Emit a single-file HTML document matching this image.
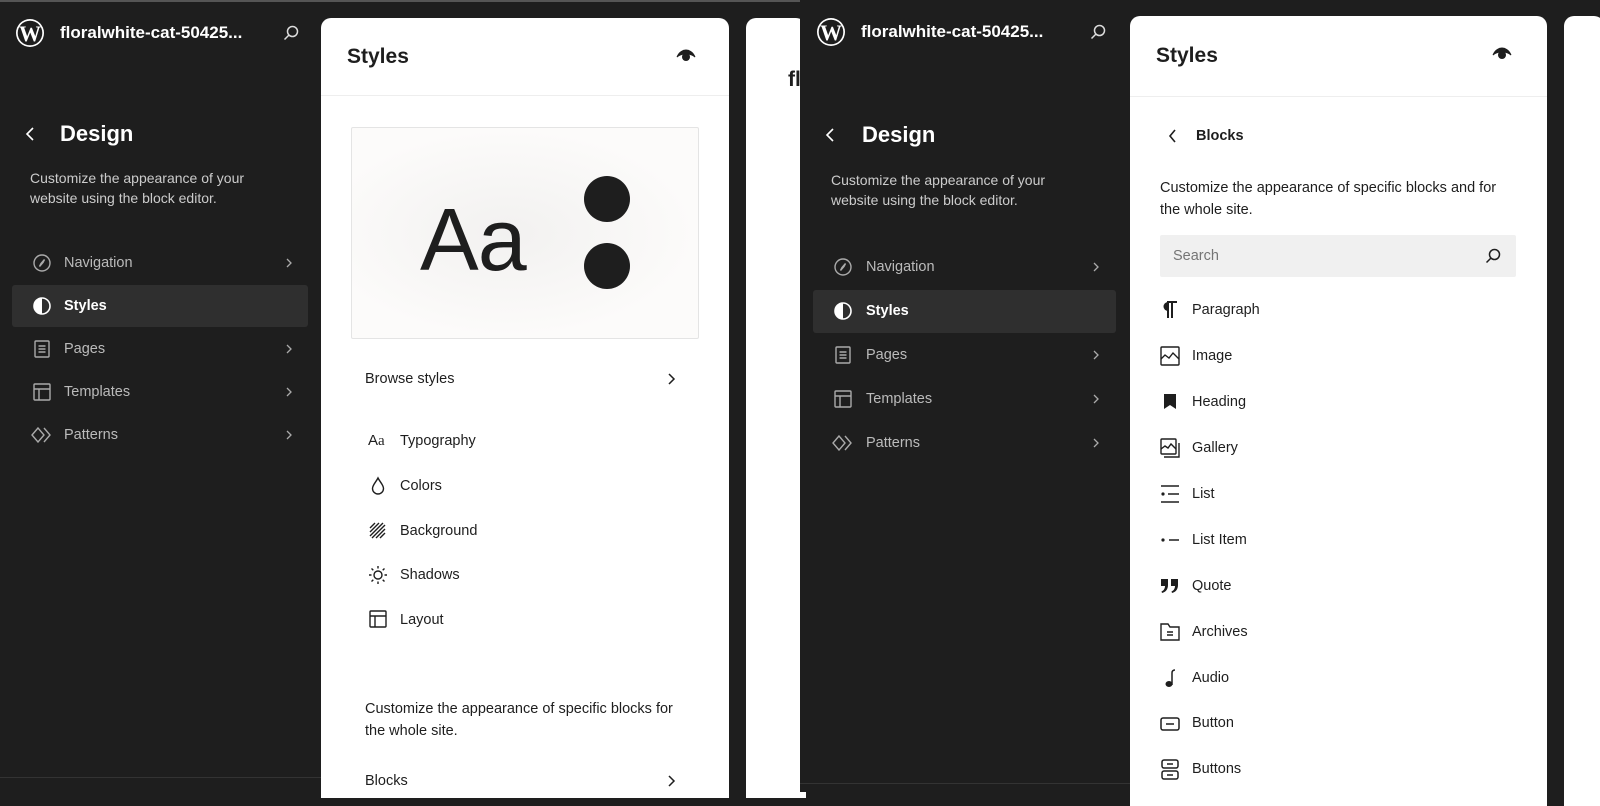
<!DOCTYPE html>
<html><head><meta charset="utf-8"><style>
*{margin:0;padding:0;box-sizing:border-box}
body{width:1600px;height:792px;background:#1e1e1e;position:relative;overflow:hidden;font-family:"Liberation Sans",sans-serif}
.a{position:absolute;white-space:nowrap}
.w{color:#fff}
.card{position:absolute;background:#fff;border-radius:10px 10px 0 0}
.nav{font-size:14.5px;color:#bbb;line-height:20px}
.ic{position:absolute}
.blk{font-size:14.5px;color:#1e1e1e;line-height:20px}
</style></head><body>
<div class="a" style="left:0;top:0;width:800px;height:2px;background:#555"></div>

<!-- LEFT SCREENSHOT -->
<svg class="ic" style="left:15px;top:18px" width="30" height="30" viewBox="0 0 30 30"><circle cx="15" cy="15" r="14" fill="#fff"/><circle cx="15" cy="15" r="12.3" fill="#1e1e1e"/><text x="15" y="23" text-anchor="middle" font-family="Liberation Serif" font-weight="bold" font-size="22" fill="#fff">W</text></svg>
<div class="a w" style="left:60px;top:23px;font-size:17px;font-weight:bold;line-height:20px">floralwhite-cat-50425...</div>
<svg class="ic" style="left:282px;top:24px" width="18" height="18" viewBox="0 0 18 18" fill="none" stroke="#ddd" stroke-width="1.5"><circle cx="10.5" cy="7.5" r="5"/><path d="M7 11l-4.5 4.5"/></svg>
<svg class="ic" style="left:24px;top:126px" width="14" height="16"><path d="M9 2L3 8l6 6" fill="none" stroke="#fff" stroke-width="1.6"/></svg>
<div class="a w" style="left:60px;top:121px;font-size:22px;font-weight:bold;line-height:26px">Design</div>
<div class="a" style="left:30px;top:169px;font-size:14px;line-height:19.5px;color:#ccc">Customize the appearance of your<br>website using the block editor.</div>
<div class="a" style="left:12px;top:285px;width:296px;height:42px;background:#2f2f2f;border-radius:3px"></div>
<svg class="ic" style="left:33px;top:254px" width="18" height="18" fill="none" stroke="#aaa" stroke-width="1.4"><circle cx="9" cy="9" r="8"/><path d="M11.5 5.5L8 9.5 6.5 12.5 10 8.5z" fill="#aaa"/></svg>
<svg class="ic" style="left:33px;top:297px" width="18" height="18"><circle cx="9" cy="9" r="8" fill="none" stroke="#fff" stroke-width="1.6"/><path d="M9 1a8 8 0 0 0 0 16z" fill="#fff"/></svg>
<svg class="ic" style="left:34px;top:340px" width="16" height="18" fill="none" stroke="#aaa" stroke-width="1.4"><rect x="1" y="1" width="14" height="16" rx="1"/><path d="M4.5 6h7M4.5 9h7M4.5 12h7"/></svg>
<svg class="ic" style="left:33px;top:383px" width="18" height="18" fill="none" stroke="#aaa" stroke-width="1.4"><rect x="1" y="1" width="16" height="16" rx="1"/><path d="M1 6h16M6 6v11"/></svg>
<svg class="ic" style="left:31px;top:427px" width="22" height="16" fill="none" stroke="#aaa" stroke-width="1.4"><path d="M7 1L1 8l6 7 6-7z"/><path d="M13 1l6 7-6 7"/></svg>
<div class="a nav" style="left:64px;top:253px">Navigation</div>
<div class="a nav" style="left:64px;top:296px;color:#fff;font-weight:bold">Styles</div>
<div class="a nav" style="left:64px;top:339px">Pages</div>
<div class="a nav" style="left:64px;top:382px">Templates</div>
<div class="a nav" style="left:64px;top:425px">Patterns</div>
<svg class="ic" style="left:285px;top:257px" width="8" height="12"><path d="M2 2l4 4-4 4" fill="none" stroke="#aaa" stroke-width="1.3"/></svg>
<svg class="ic" style="left:285px;top:343px" width="8" height="12"><path d="M2 2l4 4-4 4" fill="none" stroke="#aaa" stroke-width="1.3"/></svg>
<svg class="ic" style="left:285px;top:386px" width="8" height="12"><path d="M2 2l4 4-4 4" fill="none" stroke="#aaa" stroke-width="1.3"/></svg>
<svg class="ic" style="left:285px;top:429px" width="8" height="12"><path d="M2 2l4 4-4 4" fill="none" stroke="#aaa" stroke-width="1.3"/></svg>
<div class="a" style="left:0;top:777px;width:321px;height:1px;background:#333"></div>

<div class="card" style="left:321px;top:18px;width:408px;height:780px">
 <div class="a" style="left:26px;top:27px;font-size:21px;font-weight:bold;color:#1e1e1e;line-height:24px">Styles</div>
 <svg class="ic" style="left:355px;top:30px" width="20" height="16"><path d="M1 9c2-5 6-7 9-7s7 2 9 7c-2-2-5-3-9-3s-7 1-9 3z" fill="#1e1e1e" stroke="#1e1e1e" stroke-width="1"/><circle cx="10" cy="9" r="4" fill="#1e1e1e"/></svg>
 <div class="a" style="left:0;top:77px;width:408px;height:1px;background:#eee"></div>
 <div class="a" style="left:30px;top:109px;width:348px;height:212px;border:1px solid #e4e4e4;border-radius:2px;background:radial-gradient(ellipse at 45% 50%,#f2f1f0,#fcfbfa 70%)"></div>
 <div class="a" style="left:99px;top:178px;font-size:88px;line-height:88px;color:#1e1e1e;letter-spacing:-1px">Aa</div>
 <div class="a" style="left:263px;top:158px;width:46px;height:46px;border-radius:50%;background:#1e1e1e"></div>
 <div class="a" style="left:263px;top:225px;width:46px;height:46px;border-radius:50%;background:#1e1e1e"></div>
 <div class="a blk" style="left:44px;top:351px">Browse styles</div>
 <svg class="ic" style="left:346px;top:354px" width="10" height="14"><path d="M2 2l5 5-5 5" fill="none" stroke="#1e1e1e" stroke-width="1.5"/></svg>
 <div class="a" style="left:47px;top:414px;font-size:15px;color:#1e1e1e">A<span style="font-family:'Liberation Serif';font-size:15px">a</span></div>
 <svg class="ic" style="left:49px;top:458px" width="16" height="20" fill="none" stroke="#1e1e1e" stroke-width="1.4"><path d="M8 2C6 6 2.5 9 2.5 12.5a5.5 5.5 0 0 0 11 0C13.5 9 10 6 8 2z"/></svg>
 <svg class="ic" style="left:48px;top:504px" width="18" height="18" stroke="#1e1e1e" stroke-width="1.4"><path d="M1 6l5-5M1 10l9-9M1 14l13-13M3 16l13-13M7 16l9-9M11 16l5-5"/></svg>
 <svg class="ic" style="left:47px;top:547px" width="20" height="20" fill="none" stroke="#1e1e1e" stroke-width="1.4"><circle cx="10" cy="10" r="4"/><path d="M10 1v2.5M10 16.5V19M1 10h2.5M16.5 10H19M3.5 3.5l1.8 1.8M14.7 14.7l1.8 1.8M3.5 16.5l1.8-1.8M14.7 5.3l1.8-1.8"/></svg>
 <svg class="ic" style="left:48px;top:592px" width="18" height="18" fill="none" stroke="#1e1e1e" stroke-width="1.4"><rect x="1" y="1" width="16" height="16" rx="1"/><path d="M1 6h16M6 6v11"/></svg>
 <div class="a blk" style="left:79px;top:413px">Typography</div>
 <div class="a blk" style="left:79px;top:458px">Colors</div>
 <div class="a blk" style="left:79px;top:503px">Background</div>
 <div class="a blk" style="left:79px;top:547px">Shadows</div>
 <div class="a blk" style="left:79px;top:592px">Layout</div>
 <div class="a blk" style="left:44px;top:681px;line-height:21.5px;white-space:normal;width:330px">Customize the appearance of specific blocks for the whole site.</div>
 <div class="a blk" style="left:44px;top:753px">Blocks</div>
 <svg class="ic" style="left:346px;top:756px" width="10" height="14"><path d="M2 2l5 5-5 5" fill="none" stroke="#1e1e1e" stroke-width="1.5"/></svg>
</div>
<div class="card" style="left:746px;top:18px;width:60px;height:780px">
 <div class="a" style="left:42px;top:50px;font-size:21px;font-weight:bold;color:#1e1e1e">fl</div>
</div>

<!-- RIGHT SCREENSHOT -->
<div class="a" style="left:800px;top:0;width:800px;height:792px;background:#1e1e1e"></div>
<svg class="ic" style="left:816px;top:17px" width="30" height="30" viewBox="0 0 30 30"><circle cx="15" cy="15" r="14" fill="#fff"/><circle cx="15" cy="15" r="12.3" fill="#1e1e1e"/><text x="15" y="23" text-anchor="middle" font-family="Liberation Serif" font-weight="bold" font-size="22" fill="#fff">W</text></svg>
<div class="a w" style="left:861px;top:22px;font-size:17px;font-weight:bold;line-height:20px">floralwhite-cat-50425...</div>
<svg class="ic" style="left:1089px;top:23px" width="18" height="18" viewBox="0 0 18 18" fill="none" stroke="#ddd" stroke-width="1.5"><circle cx="10.5" cy="7.5" r="5"/><path d="M7 11l-4.5 4.5"/></svg>
<svg class="ic" style="left:824px;top:127px" width="14" height="16"><path d="M9 2L3 8l6 6" fill="none" stroke="#fff" stroke-width="1.6"/></svg>
<div class="a w" style="left:862px;top:122px;font-size:22px;font-weight:bold;line-height:26px">Design</div>
<div class="a" style="left:831px;top:171px;font-size:14px;line-height:19.5px;color:#ccc">Customize the appearance of your<br>website using the block editor.</div>
<div class="a" style="left:813px;top:290px;width:303px;height:43px;background:#2f2f2f;border-radius:3px"></div>
<svg class="ic" style="left:834px;top:258px" width="18" height="18" fill="none" stroke="#aaa" stroke-width="1.4"><circle cx="9" cy="9" r="8"/><path d="M11.5 5.5L8 9.5 6.5 12.5 10 8.5z" fill="#aaa"/></svg>
<svg class="ic" style="left:834px;top:302px" width="18" height="18"><circle cx="9" cy="9" r="8" fill="none" stroke="#fff" stroke-width="1.6"/><path d="M9 1a8 8 0 0 0 0 16z" fill="#fff"/></svg>
<svg class="ic" style="left:835px;top:346px" width="16" height="18" fill="none" stroke="#aaa" stroke-width="1.4"><rect x="1" y="1" width="14" height="16" rx="1"/><path d="M4.5 6h7M4.5 9h7M4.5 12h7"/></svg>
<svg class="ic" style="left:834px;top:390px" width="18" height="18" fill="none" stroke="#aaa" stroke-width="1.4"><rect x="1" y="1" width="16" height="16" rx="1"/><path d="M1 6h16M6 6v11"/></svg>
<svg class="ic" style="left:832px;top:435px" width="22" height="16" fill="none" stroke="#aaa" stroke-width="1.4"><path d="M7 1L1 8l6 7 6-7z"/><path d="M13 1l6 7-6 7"/></svg>
<div class="a nav" style="left:866px;top:257px">Navigation</div>
<div class="a nav" style="left:866px;top:301px;color:#fff;font-weight:bold">Styles</div>
<div class="a nav" style="left:866px;top:345px">Pages</div>
<div class="a nav" style="left:866px;top:389px">Templates</div>
<div class="a nav" style="left:866px;top:433px">Patterns</div>
<svg class="ic" style="left:1092px;top:261px" width="8" height="12"><path d="M2 2l4 4-4 4" fill="none" stroke="#aaa" stroke-width="1.3"/></svg>
<svg class="ic" style="left:1092px;top:349px" width="8" height="12"><path d="M2 2l4 4-4 4" fill="none" stroke="#aaa" stroke-width="1.3"/></svg>
<svg class="ic" style="left:1092px;top:393px" width="8" height="12"><path d="M2 2l4 4-4 4" fill="none" stroke="#aaa" stroke-width="1.3"/></svg>
<svg class="ic" style="left:1092px;top:437px" width="8" height="12"><path d="M2 2l4 4-4 4" fill="none" stroke="#aaa" stroke-width="1.3"/></svg>
<div class="a" style="left:800px;top:783px;width:330px;height:1px;background:#333"></div>

<div class="card" style="left:1130px;top:16px;width:417px;height:790px">
 <div class="a" style="left:26px;top:28px;font-size:21px;font-weight:bold;color:#1e1e1e;line-height:24px">Styles</div>
 <svg class="ic" style="left:362px;top:30px" width="20" height="16"><path d="M1 9c2-5 6-7 9-7s7 2 9 7c-2-2-5-3-9-3s-7 1-9 3z" fill="#1e1e1e" stroke="#1e1e1e" stroke-width="1"/><circle cx="10" cy="9" r="4" fill="#1e1e1e"/></svg>
 <div class="a" style="left:0;top:80px;width:417px;height:1px;background:#eee"></div>
 <svg class="ic" style="left:37px;top:112px" width="12" height="16"><path d="M8 2L3 8l5 6" fill="none" stroke="#1e1e1e" stroke-width="1.6"/></svg>
 <div class="a" style="left:66px;top:110px;font-size:14.5px;font-weight:bold;color:#1e1e1e;line-height:20px">Blocks</div>
 <div class="a blk" style="left:30px;top:162px;line-height:21.5px">Customize the appearance of specific blocks and for<br>the whole site.</div>
 <div class="a" style="left:30px;top:219px;width:356px;height:42px;background:#f0f0f0;border-radius:2px"></div>
 <div class="a" style="left:43px;top:230px;font-size:14.5px;color:#757575;line-height:20px">Search</div>
 <svg class="ic" style="left:354px;top:231px" width="18" height="18" fill="none" stroke="#1e1e1e" stroke-width="1.5"><circle cx="10.5" cy="7.5" r="5"/><path d="M7 11l-4.5 4.5"/></svg>
 <svg class="ic" style="left:30px;top:284px" width="20" height="20"><path d="M7 2h10M8 2v16M12 2v16" stroke="#1e1e1e" stroke-width="2" fill="none"/><path d="M8 2a4.5 4.5 0 0 0 0 9z" fill="#1e1e1e"/></svg>
 <svg class="ic" style="left:30px;top:330px" width="20" height="20" fill="none" stroke="#1e1e1e" stroke-width="1.4"><rect x="1" y="1" width="18" height="18" rx="1"/><path d="M1 13l4-4 4 3 4-5 6 6"/></svg>
 <svg class="ic" style="left:32px;top:376px" width="16" height="20"><path d="M2 2h12v15l-6-4-6 4z" fill="#1e1e1e"/></svg>
 <svg class="ic" style="left:30px;top:422px" width="21" height="21" fill="none" stroke="#1e1e1e" stroke-width="1.4"><rect x="1" y="1" width="15" height="15" rx="1"/><path d="M1 11l4-3 3 2 3-4 5 5M4 19h15V5"/></svg>
 <svg class="ic" style="left:30px;top:468px" width="20" height="20" stroke="#1e1e1e" stroke-width="1.5"><path d="M1 2h18M8 10h11M1 18h18"/><circle cx="3" cy="10" r="1.6" fill="#1e1e1e" stroke="none"/></svg>
 <svg class="ic" style="left:30px;top:514px" width="20" height="20" stroke="#1e1e1e" stroke-width="1.5"><path d="M9 10h10"/><circle cx="3" cy="10" r="1.6" fill="#1e1e1e" stroke="none"/></svg>
 <svg class="ic" style="left:30px;top:560px" width="20" height="20" fill="#1e1e1e"><path d="M1 3h7v6c0 4-2 7-6 8l-.5-1.5C4 14.5 5 12 5 10H1zM11 3h7v6c0 4-2 7-6 8l-.5-1.5C14 14.5 15 12 15 10h-4z"/></svg>
 <svg class="ic" style="left:30px;top:606px" width="20" height="20" fill="none" stroke="#1e1e1e" stroke-width="1.4"><path d="M1 2h7l2 3h9v13H1z"/><path d="M7 10h6M7 13h6"/></svg>
 <svg class="ic" style="left:32px;top:652px" width="16" height="20"><path d="M10 17V5c0-2 1-3 3-3" fill="none" stroke="#1e1e1e" stroke-width="1.5"/><ellipse cx="7" cy="16" rx="3.5" ry="3" fill="#1e1e1e"/></svg>
 <svg class="ic" style="left:30px;top:698px" width="20" height="20" fill="none" stroke="#1e1e1e" stroke-width="1.5"><rect x="1" y="4" width="18" height="12" rx="2"/><path d="M6 10h8"/></svg>
 <svg class="ic" style="left:31px;top:743px" width="18" height="22" fill="none" stroke="#1e1e1e" stroke-width="1.5"><rect x="1" y="1" width="16" height="8" rx="2"/><rect x="1" y="12" width="16" height="8" rx="2"/><path d="M6 5h6M6 16h6"/></svg>
 <div class="a blk" style="left:62px;top:284px">Paragraph</div>
 <div class="a blk" style="left:62px;top:330px">Image</div>
 <div class="a blk" style="left:62px;top:376px">Heading</div>
 <div class="a blk" style="left:62px;top:422px">Gallery</div>
 <div class="a blk" style="left:62px;top:468px">List</div>
 <div class="a blk" style="left:62px;top:514px">List Item</div>
 <div class="a blk" style="left:62px;top:560px">Quote</div>
 <div class="a blk" style="left:62px;top:606px">Archives</div>
 <div class="a blk" style="left:62px;top:652px">Audio</div>
 <div class="a blk" style="left:62px;top:697px">Button</div>
 <div class="a blk" style="left:62px;top:743px">Buttons</div>
</div>
<div class="card" style="left:1564px;top:16px;width:40px;height:790px"></div>
</body></html>
